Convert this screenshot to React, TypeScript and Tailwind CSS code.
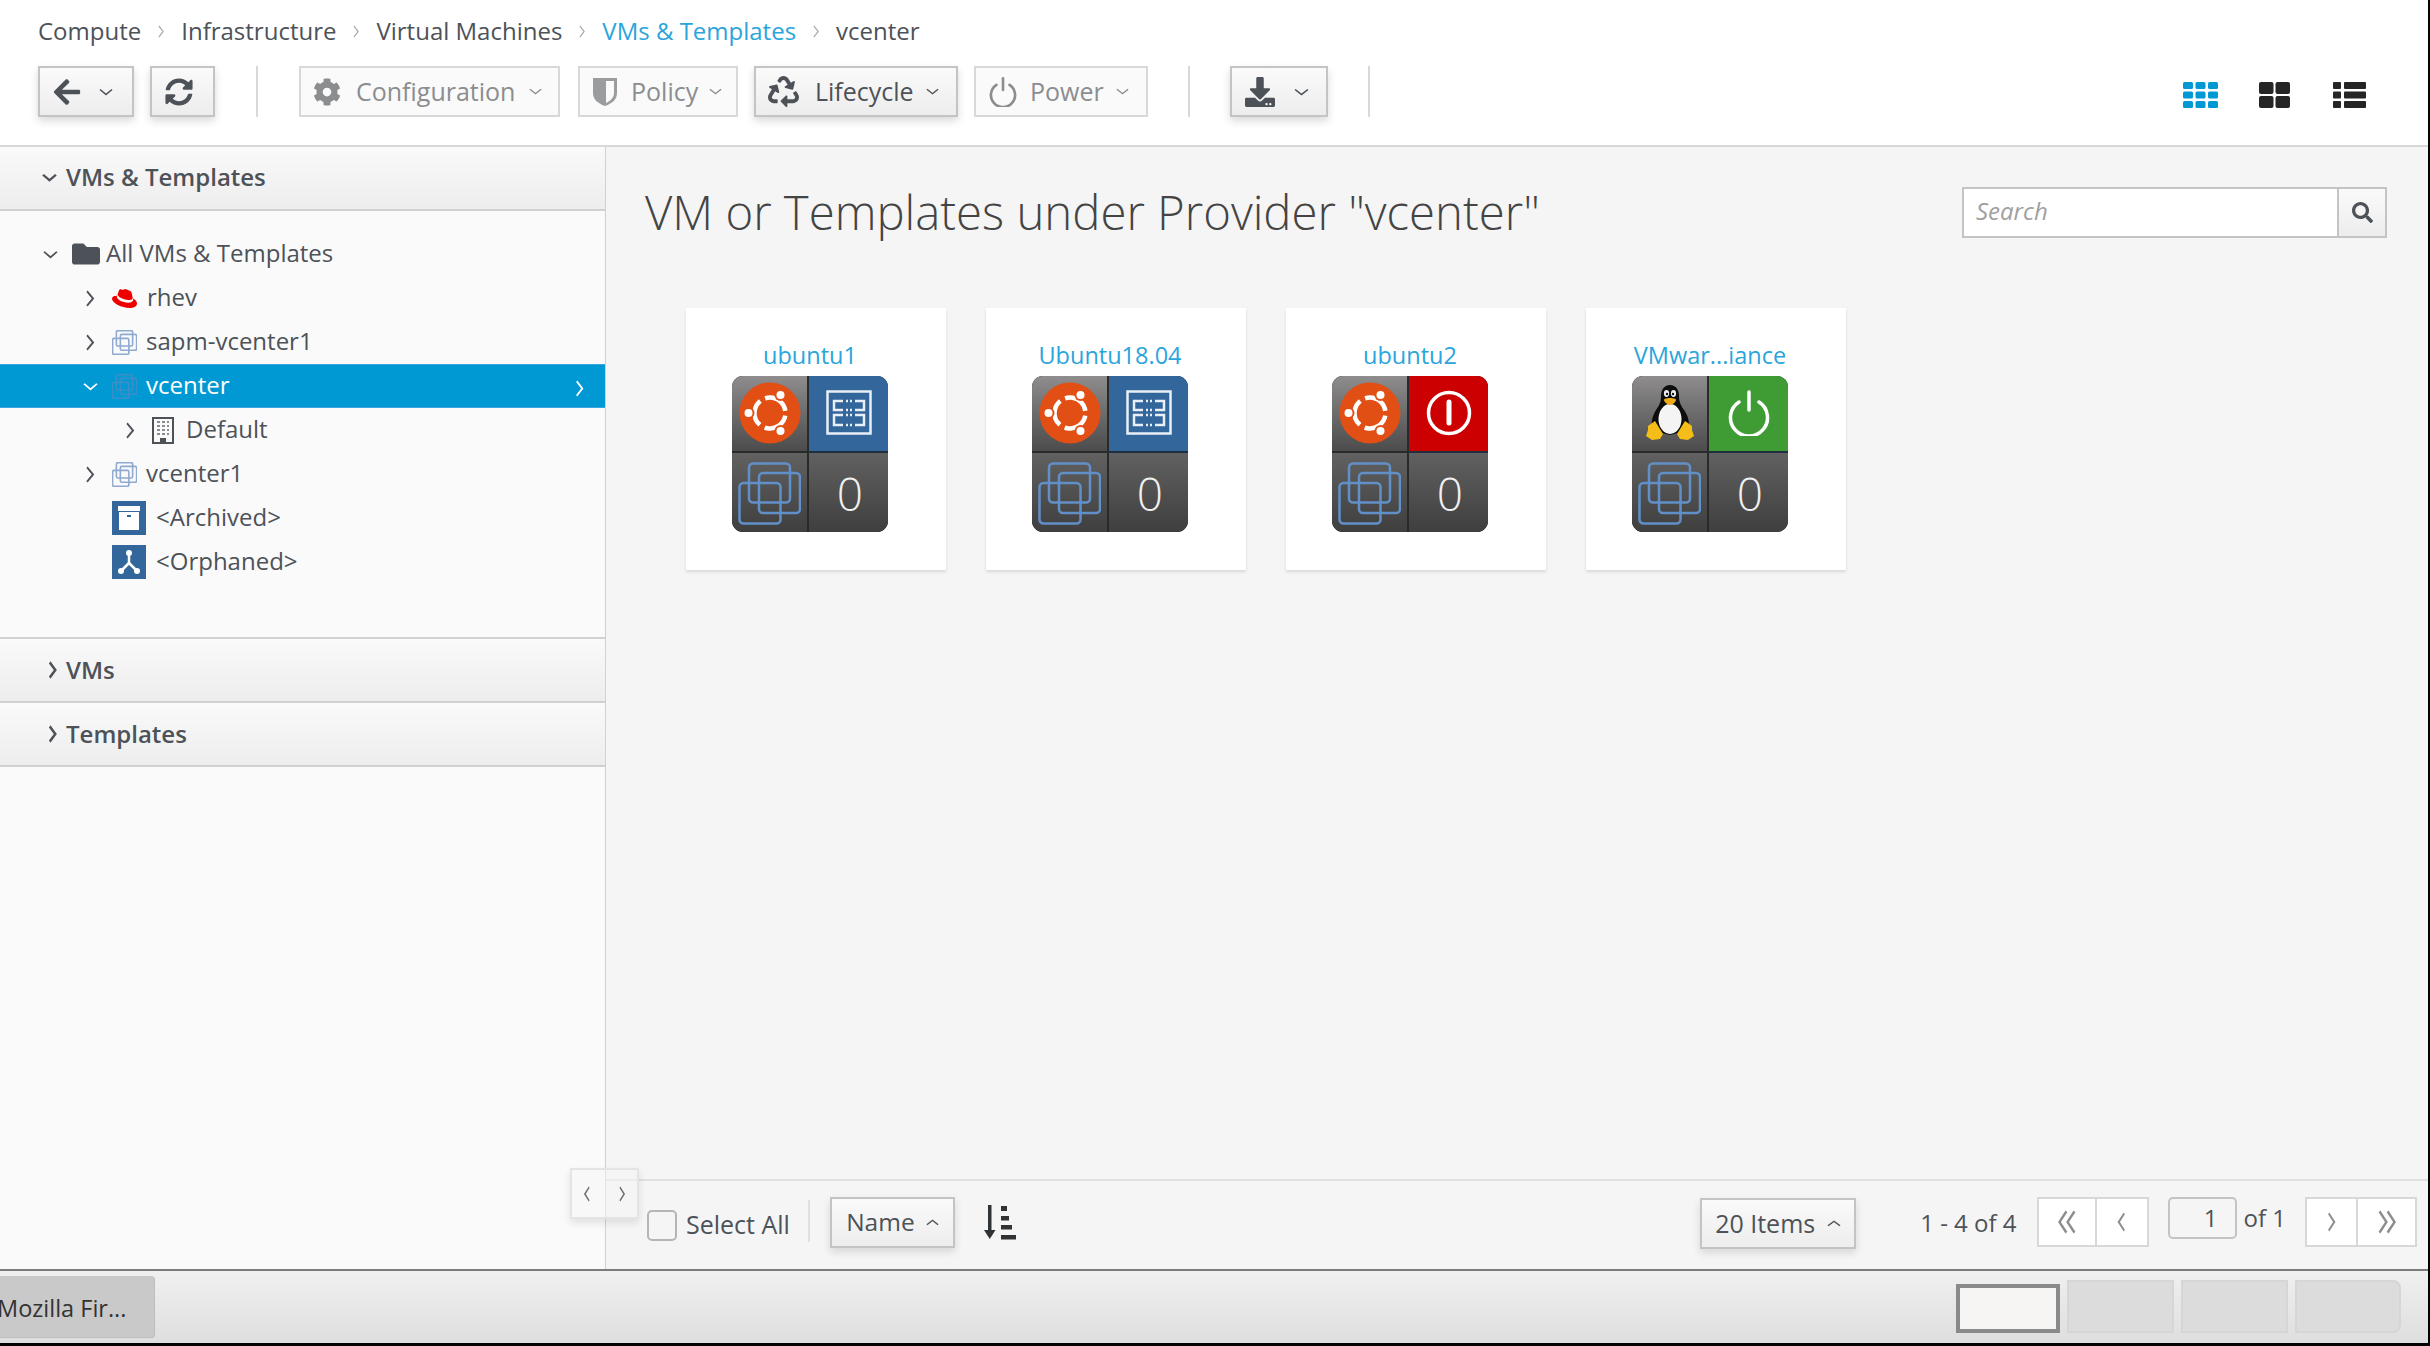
import React from "react";
import { FaArrowLeft, FaSyncAlt, FaCog, FaRecycle, FaDownload, FaSearch, FaFolder, FaRedhat } from "react-icons/fa";

function Chev({ dir, w, h, color = "currentColor", sw = 2, className = "" }: { dir: "up" | "down" | "left" | "right"; w: number; h: number; color?: string; sw?: number; className?: string }) {
  const pts = {
    down: "1,3 7,9 13,3",
    up: "1,9 7,3 13,9",
    right: "4,1 10,7 4,13",
    left: "10,1 4,7 10,13",
  }[dir];
  const vb = dir === "down" || dir === "up" ? "0 0 14 12" : "0 0 14 14";
  return (
    <svg width={w} height={h} viewBox={vb} className={`shrink-0 ${className}`} preserveAspectRatio="none" fill="none" stroke={color} strokeWidth={sw}>
      <polyline points={pts} />
    </svg>
  );
}

function DoubleChev({ dir, color }: { dir: "left" | "right"; color: string }) {
  const pts = dir === "left" ? ["9,1 3,9 9,17", "16,1 10,9 16,17"] : ["3,1 9,9 3,17", "10,1 16,9 10,17"];
  return (
    <svg width="22" height="24" viewBox="0 0 19 18" preserveAspectRatio="none" fill="none" stroke={color} strokeWidth="2">
      <polyline points={pts[0]} />
      <polyline points={pts[1]} />
    </svg>
  );
}

function VmIcon({ size, color, sw = 2 }: { size: number; color: string; sw?: number }) {
  return (
    <svg width={size} height={size} viewBox="0 0 63 63" fill="none" stroke={color} strokeWidth={sw} className="shrink-0">
      <rect x="11" y="1.500" width="41" height="39" rx="4" />
      <rect x="21" y="11" width="41" height="40" rx="4" />
      <rect x="1.500" y="21" width="41" height="40.500" rx="4" />
    </svg>
  );
}

function Ubuntu() {
  return (
    <svg width="62" height="62" viewBox="0 0 62 62" className="shrink-0">
      <circle cx="31" cy="31" r="30.500" fill="#e24f14" />
      <circle cx="31" cy="31" r="15.500" fill="none" stroke="#fff" strokeWidth="4.500" strokeDasharray="27 5.470" transform="rotate(10 31 31)" />
      <circle cx="9.500" cy="31" r="6" fill="#e24f14" />
      <circle cx="9.500" cy="31" r="4" fill="#fff" />
      <circle cx="41.500" cy="13" r="6" fill="#e24f14" />
      <circle cx="41.500" cy="13" r="4" fill="#fff" />
      <circle cx="41.500" cy="49" r="6" fill="#e24f14" />
      <circle cx="41.500" cy="49" r="4" fill="#fff" />
    </svg>
  );
}

function Tux() {
  return (
    <svg width="50" height="57" viewBox="0 0 50 57" className="shrink-0">
      <path d="M25 1c-6 0-9 5-9 11 0 6-1 8-5 14-3 5-5 11-4 16l6 6 12 3 12-3 7-7c0-6-2-11-5-15-4-6-5-9-5-14 0-6-3-11-9-11z" fill="#0d0d0d" />
      <ellipse cx="25" cy="35" rx="11.500" ry="15" fill="#f4f4f4" />
      <ellipse cx="21.500" cy="9.500" rx="2.600" ry="3.400" fill="#eee" />
      <ellipse cx="28.500" cy="9.500" rx="2.600" ry="3.400" fill="#eee" />
      <circle cx="22" cy="10" r="1.200" fill="#111" />
      <circle cx="28" cy="10" r="1.200" fill="#111" />
      <path d="M19 15.500c2-2 10-2 12 0 .8 1-3 5.500-6 5.500s-6.800-4.500-6-5.500z" fill="#eeaa15" />
      <path d="M3 42l7-5 8 13-3 5-8 1-6-4 2-6z" fill="#f5bd17" />
      <path d="M47 42l-7-5-8 13 3 5 8 1 6-4-2-6z" fill="#f5bd17" />
    </svg>
  );
}

function TemplateIcon() {
  return (
    <svg width="46" height="45" viewBox="0 0 46 45" fill="none" stroke="#e9eff6" className="shrink-0">
      <rect x="1.500" y="1.500" width="43" height="42" strokeWidth="2.500" />
      <path d="M17 11H8v9h9M29 11h9v9h-9M17 25H8v10h9M29 25h9v10h-9" strokeWidth="2.500" />
      <path d="M20 11h2M24 11h2M20 20h2M24 20h2M20 25h2M24 25h2M20 35h2M24 35h2" strokeWidth="2.500" />
    </svg>
  );
}

function RedOff() {
  return (
    <svg width="46" height="46" viewBox="0 0 46 46" fill="none" stroke="#fff" className="shrink-0">
      <circle cx="23" cy="23" r="20.500" strokeWidth="3.500" />
      <line x1="23" y1="12" x2="23" y2="33" strokeWidth="5" strokeLinecap="round" />
    </svg>
  );
}

function PowerIcon({ size, color, sw }: { size: number; color: string; sw: number }) {
  return (
    <svg width={size} height={size} viewBox="0 0 42 46" fill="none" stroke={color} strokeWidth={sw} strokeLinecap="round" className="shrink-0">
      <path d="M11 12a18.500 18.500 0 1 0 20 0" />
      <line x1="21" y1="2" x2="21" y2="20" />
    </svg>
  );
}

function ShieldIcon() {
  return (
    <svg width="26" height="30" viewBox="0 0 26 30" className="shrink-0">
      <path d="M1 1h24v15c0 7-6 11-12 13C7 27 1 23 1 16z" fill="#9a9c9e" />
      <path d="M14 4h8v12c0 5-4 8-8 10z" fill="#fafafa" />
    </svg>
  );
}

function Building() {
  return (
    <svg width="22" height="27" viewBox="0 0 22 27" fill="none" className="shrink-0">
      <rect x="1" y="1" width="20" height="25" stroke="#4d5258" strokeWidth="2" />
      <path d="M5 5h3M10 5h3M15 5h2M5 9h3M10 9h3M15 9h2M5 13h3M10 13h3M15 13h2M5 17h3M10 17h3M15 17h2" stroke="#8b8d8f" strokeWidth="2" />
      <rect x="8" y="21" width="6" height="5" fill="#4d5258" />
    </svg>
  );
}

function Archive() {
  return (
    <svg width="34" height="34" viewBox="0 0 34 34" className="shrink-0">
      <rect width="34" height="34" fill="#33669b" />
      <rect x="6" y="5" width="22" height="5" fill="#fff" />
      <rect x="7" y="11" width="20" height="18" fill="#fff" />
      <rect x="15" y="14" width="4" height="2" fill="#33669b" />
    </svg>
  );
}

function Orphan() {
  return (
    <svg width="34" height="34" viewBox="0 0 34 34" className="shrink-0">
      <rect width="34" height="34" fill="#33669b" />
      <g stroke="#fff" strokeWidth="2.500">
        <line x1="17" y1="8" x2="17" y2="19" />
        <line x1="17" y1="18" x2="9" y2="26" />
        <line x1="17" y1="18" x2="25" y2="26" />
      </g>
      <circle cx="17" cy="8" r="3" fill="#fff" />
      <circle cx="9" cy="26" r="3" fill="#fff" />
      <circle cx="25" cy="26" r="3" fill="#fff" />
    </svg>
  );
}

function ViewGrid() {
  const cells: React.ReactNode[] = [];
  for (let r = 0; r < 3; r++) for (let c = 0; c < 3; c++) cells.push(<rect key={`${r}${c}`} x={c * 12.500} y={r * 9.500} width="10" height="7" rx="1.500" fill="#0099d3" />);
  return <svg width="35" height="26" viewBox="0 0 35 26">{cells}</svg>;
}
function ViewMid() {
  return (
    <svg width="31" height="26" viewBox="0 0 31 26" fill="#252525">
      <rect width="14.500" height="12" rx="2" />
      <rect x="16.500" width="14.500" height="12" rx="2" />
      <rect y="14" width="14.500" height="12" rx="2" />
      <rect x="16.500" y="14" width="14.500" height="12" rx="2" />
    </svg>
  );
}
function ViewList() {
  return (
    <svg width="33" height="26" viewBox="0 0 33 26" fill="#252525">
      {[0, 9.500, 19].map((y) => (
        <g key={y}>
          <rect y={y} width="8" height="7" rx="1" />
          <rect x="11" y={y} width="22" height="7" rx="1" />
        </g>
      ))}
    </svg>
  );
}

function SortIcon() {
  return (
    <svg width="32" height="35" viewBox="0 0 32 35" fill="#2f3336">
      <rect x="4" y="0" width="3.500" height="28" />
      <path d="M0 25h11.500l-5.750 9z" />
      <rect x="17" y="1" width="6" height="5" />
      <rect x="17" y="11" width="8" height="4.500" />
      <rect x="17" y="20" width="11" height="4.500" />
      <rect x="17" y="30" width="15" height="4.500" />
    </svg>
  );
}

function Btn({ w, ml, disabled, children }: { w: string; ml: string; disabled?: boolean; children: React.ReactNode }) {
  return (
    <div
      className={`${w} ${ml} h-[51px] flex items-center shrink-0 border-2 text-[25px] ${
        disabled
          ? "border-[#d8d8d8] bg-[#fafafa] text-[#8b8d8f]"
          : "border-[#c4c4c4] bg-gradient-to-b from-[#fafafa] to-[#ededed] text-[#4d5258] shadow-[0_4px_8px_rgba(0,0,0,0.15)]"
      }`}
    >
      {children}
    </div>
  );
}

function Crumb({ children, blue }: { children: React.ReactNode; blue?: boolean }) {
  return <span className={blue ? "text-[#2aa5dc]" : "text-[#4d5258]"}>{children}</span>;
}
function Sep() {
  return <Chev dir="right" w={10} h={13} color="#a8a8a8" sw={1.500} className="mx-[15px]" />;
}
function VDiv({ ml }: { ml: string }) {
  return <div className={`w-[2px] h-[51px] bg-[#d8d8d8] shrink-0 ${ml}`} />;
}

function TreeRow({ pl, chev, icon, gap, selected, children }: { pl: string; chev?: "right" | "down"; icon: React.ReactNode; gap: string; selected?: boolean; children: React.ReactNode }) {
  return (
    <div className={`h-[44px] flex items-center ${pl} ${selected ? "bg-[#0099d3] text-white border-y border-[#39a5dc]" : "text-[#4d5258]"}`}>
      {chev ? (
        <span className="w-[29px] shrink-0 flex">
          <Chev dir={chev} w={chev === "down" ? 15 : 14} h={chev === "down" ? 11 : 17} color={selected ? "#fff" : "#4d5258"} sw={1.800} />
        </span>
      ) : null}
      {icon}
      <span className={`${gap} flex-1 pb-[2px]`}>{children}</span>
      {selected ? <Chev dir="right" w={13} h={17} color="#fff" sw={1.800} className="mr-[19px] mt-[4px]" /> : null}
    </div>
  );
}

function PanelHead({ title, open }: { title: string; open?: boolean }) {
  return (
    <div className={`h-[64px] flex items-center pl-[42px] bg-gradient-to-b from-[#fafafa] to-[#ededed] border-b-2 border-[#d1d1d1] text-[#4d5258] font-semibold ${open ? "pb-[2px]" : ""}`}>
      <span className="w-[24px] shrink-0 flex">
        {open ? <Chev dir="down" w={15} h={11} color="#4d5258" sw={2.200} /> : <Chev dir="right" w={13} h={18} color="#4d5258" sw={2.400} className="ml-[4px]" />}
      </span>
      {title}
    </div>
  );
}

function Card({ title, os, state }: { title: string; os: React.ReactNode; state: React.ReactNode }) {
  return (
    <div className="w-[260px] h-[262px] bg-white shadow-[0_2px_3px_rgba(0,0,0,0.12)] pl-[46px] pt-[31px] shrink-0">
      <div className="w-[156px] h-[37px] flex justify-center whitespace-nowrap text-[#2aa5dc] text-[23.500px] leading-[32px]">{title}</div>
      <div className="w-[156px] h-[156px] rounded-[11px] overflow-hidden grid grid-cols-[77px_79px] grid-rows-[77px_79px] bg-[#111]">
        <div className="bg-gradient-to-b from-[#8f8d8d] to-[#4c4c4c] border-r-2 border-b-2 border-[#2a2a2a] flex items-center justify-center pb-[2px]">{os}</div>
        {state}
        <div className="bg-gradient-to-b from-[#616161] to-[#3f3f3f] border-r-2 border-[#2a2a2a] flex items-center justify-center pt-[2px]">
          <VmIcon size={63} color="#6190c9" sw={2.500} />
        </div>
        <div className="bg-gradient-to-b from-[#616161] to-[#3f3f3f] flex items-center justify-center pl-[3px] text-[#f0f0f0] text-[46px] font-light leading-none">0</div>
      </div>
    </div>
  );
}

function StateCell({ bg, children }: { bg: string; children: React.ReactNode }) {
  return <div className={`${bg} border-b-2 border-[#1f2f40] flex items-center justify-center pb-[2px]`}>{children}</div>;
}

function PagerCell({ w, border, children }: { w: string; border?: boolean; children: React.ReactNode }) {
  return <div className={`${w} h-full flex items-center justify-center ${border ? "border-r-2 border-[#d8d8d8]" : ""}`}>{children}</div>;
}

export default function App() {
  return (
    <div className="w-[2430px] h-[1346px] flex flex-col overflow-hidden bg-white border-r-2 border-black font-['Open_Sans',sans-serif] text-[24px] text-[#4d5258]">
      <header className="h-[147px] shrink-0 border-b-2 border-[#d8d8d8] bg-white pl-[38px] flex flex-col">
        <div className="h-[66px] flex items-center pb-[4px]">
          <Crumb>Compute</Crumb>
          <Sep />
          <Crumb>Infrastructure</Crumb>
          <Sep />
          <Crumb>Virtual Machines</Crumb>
          <Sep />
          <Crumb blue>VMs &amp; Templates</Crumb>
          <Sep />
          <Crumb>vcenter</Crumb>
        </div>
        <div className="flex items-center">
          <Btn w="w-[96px]" ml="ml-0">
            <FaArrowLeft className="ml-[12px] text-[30px]" />
            <Chev dir="down" w={14} h={10} sw={1.500} className="ml-[17px]" />
          </Btn>
          <Btn w="w-[65px]" ml="ml-[16px]">
            <FaSyncAlt className="ml-[13px] text-[28px]" />
          </Btn>
          <VDiv ml="ml-[41px]" />
          <Btn w="w-[261px]" ml="ml-[41px]" disabled>
            <FaCog className="ml-[12px] text-[28px]" />
            <span className="ml-[15px]">Configuration</span>
            <Chev dir="down" w={13} h={9} sw={1.500} className="ml-[14px]" />
          </Btn>
          <Btn w="w-[160px]" ml="ml-[18px]" disabled>
            <span className="ml-[12px] flex"><ShieldIcon /></span>
            <span className="ml-[13px]">Policy</span>
            <Chev dir="down" w={13} h={9} sw={1.500} className="ml-[11px]" />
          </Btn>
          <Btn w="w-[204px]" ml="ml-[16px]">
            <FaRecycle className="ml-[12px] text-[31px]" />
            <span className="ml-[16px] font-medium">Lifecycle</span>
            <Chev dir="down" w={13} h={9} sw={1.500} className="ml-[12px]" />
          </Btn>
          <Btn w="w-[174px]" ml="ml-[16px]" disabled>
            <span className="ml-[12px] flex"><PowerIcon size={30} color="#8b8d8f" sw={4} /></span>
            <span className="ml-[12px]">Power</span>
            <Chev dir="down" w={13} h={9} sw={1.500} className="ml-[12px]" />
          </Btn>
          <VDiv ml="ml-[40px]" />
          <Btn w="w-[98px]" ml="ml-[40px]">
            <FaDownload className="ml-[13px] text-[30px]" />
            <Chev dir="down" w={15} h={10} sw={1.500} className="ml-[19px]" />
          </Btn>
          <VDiv ml="ml-[40px]" />
          <div className="flex-1" />
          <div className="flex items-center mr-[62px] mt-[6px]">
            <ViewGrid />
            <span className="ml-[41px] flex"><ViewMid /></span>
            <span className="ml-[43px] flex"><ViewList /></span>
          </div>
        </div>
      </header>

      <main className="relative flex-1 min-h-0 flex border-b-2 border-[#7c7c7c]">
        <aside className="w-[606px] shrink-0 bg-[#fafafa] border-r border-[#d1d1d1] flex flex-col">
          <PanelHead title="VMs & Templates" open />
          <div className="pt-[21px] pb-[53px] border-b-2 border-[#d1d1d1]">
            <TreeRow pl="pl-[43px]" icon={<FaFolder className="text-[28px] text-[#4d5258] shrink-0" />} chev="down" gap="ml-[6px]">All VMs &amp; Templates</TreeRow>
            <TreeRow pl="pl-[83px]" chev="right" icon={<FaRedhat className="text-[25px] text-[#e00] shrink-0" />} gap="ml-[10px]">rhev</TreeRow>
            <TreeRow pl="pl-[83px]" chev="right" icon={<VmIcon size={25} color="#8fa9cf" sw={4} />} gap="ml-[9px]">sapm-vcenter1</TreeRow>
            <TreeRow pl="pl-[83px]" chev="down" selected icon={<VmIcon size={25} color="#3a8fc9" sw={4} />} gap="ml-[9px]">vcenter</TreeRow>
            <TreeRow pl="pl-[123px]" chev="right" icon={<Building />} gap="ml-[12px]">Default</TreeRow>
            <TreeRow pl="pl-[83px]" chev="right" icon={<VmIcon size={25} color="#8fa9cf" sw={4} />} gap="ml-[9px]">vcenter1</TreeRow>
            <TreeRow pl="pl-[112px]" icon={<Archive />} gap="ml-[10px]">&lt;Archived&gt;</TreeRow>
            <TreeRow pl="pl-[112px]" icon={<Orphan />} gap="ml-[10px]">&lt;Orphaned&gt;</TreeRow>
          </div>
          <PanelHead title="VMs" />
          <PanelHead title="Templates" />
        </aside>

        <section className="flex-1 min-w-0 bg-[#f5f5f5] flex flex-col">
          <div className="flex-1 min-h-0 pl-[39px] pr-[41px] pt-[36px]">
            <div className="flex items-center justify-between h-[58px]">
              <h1 className="text-[47.300px] font-light text-[#444] leading-none whitespace-nowrap">VM or Templates under Provider "vcenter"</h1>
              <div className="w-[425px] h-[51px] flex border-2 border-[#c4c4c4] bg-white">
                <input readOnly placeholder="Search" className="flex-1 min-w-0 pl-[12px] pb-[2px] bg-white outline-none text-[24px] placeholder:italic placeholder:text-[#a0a0a0]" />
                <div className="w-[48px] shrink-0 border-l-2 border-[#c4c4c4] bg-gradient-to-b from-[#fafafa] to-[#ededed] flex items-center justify-center">
                  <FaSearch className="text-[21px] text-[#4d5258]" />
                </div>
              </div>
            </div>
            <div className="flex gap-[40px] ml-[41px] mt-[67px]">
              <Card title="ubuntu1" os={<Ubuntu />} state={<StateCell bg="bg-[#33669b]"><TemplateIcon /></StateCell>} />
              <Card title="Ubuntu18.04" os={<Ubuntu />} state={<StateCell bg="bg-[#33669b]"><TemplateIcon /></StateCell>} />
              <Card title="ubuntu2" os={<Ubuntu />} state={<StateCell bg="bg-[#cc0000]"><RedOff /></StateCell>} />
              <Card title="VMwar...iance" os={<Tux />} state={<StateCell bg="bg-[#3f9c35]"><PowerIcon size={46} color="#fff" sw={3.500} /></StateCell>} />
            </div>
          </div>
          <div className="h-[90px] shrink-0 border-t-2 border-[#e0e0e0] flex items-start pl-[41px] pr-[11px] pt-[16px]">
            <div className="w-[30px] h-[31px] mt-[13px] rounded-[5px] border-2 border-[#b5b5b5] bg-[#f5f5f5] shrink-0" />
            <span className="ml-[9px] mt-[9px] text-[25px] text-[#4d5258] whitespace-nowrap">Select All</span>
            <div className="w-[2px] h-[42px] ml-[18px] mt-[3px] bg-[#e0e0e0] shrink-0" />
            <div className="ml-[20px] w-[125px] h-[51px] flex items-center justify-center border-2 border-[#c4c4c4] bg-gradient-to-b from-[#fafafa] to-[#ededed] shadow-[0_4px_8px_rgba(0,0,0,0.12)] shrink-0">
              <span className="font-medium text-[24.500px]">Name</span>
              <Chev dir="up" w={13} h={9} sw={1.500} className="ml-[11px]" />
            </div>
            <span className="ml-[29px] mt-[8px] flex"><SortIcon /></span>
            <div className="flex-1" />
            <div className="w-[156px] h-[51px] mt-[1px] flex items-center justify-center border-2 border-[#c4c4c4] bg-gradient-to-b from-[#fafafa] to-[#ededed] shadow-[0_4px_8px_rgba(0,0,0,0.12)] shrink-0">
              <span className="font-medium text-[25px]">20 Items</span>
              <Chev dir="up" w={14} h={9} sw={1.500} className="ml-[12px]" />
            </div>
            <span className="ml-[64px] mt-[8px] whitespace-nowrap">1 - 4 of 4</span>
            <div className="ml-[20px] w-[112px] h-[50px] flex border-2 border-[#d8d8d8] bg-white shrink-0">
              <PagerCell w="w-[60px]" border><DoubleChev dir="left" color="#8b8d8f" /></PagerCell>
              <PagerCell w="w-[50px]"><Chev dir="left" w={13} h={20} color="#8b8d8f" sw={1.800} /></PagerCell>
            </div>
            <div className="ml-[19px] w-[69px] h-[42px] rounded-[5px] border-2 border-[#c4c4c4] bg-[#f5f5f5] flex items-center justify-end pr-[17px] shrink-0">1</div>
            <span className="ml-[7px] mt-[3px] whitespace-nowrap">of 1</span>
            <div className="ml-[19px] w-[112px] h-[50px] flex border-2 border-[#d8d8d8] bg-white shrink-0">
              <PagerCell w="w-[52px]" border><Chev dir="right" w={13} h={20} color="#8b8d8f" sw={1.800} /></PagerCell>
              <PagerCell w="w-[58px]"><DoubleChev dir="right" color="#8b8d8f" /></PagerCell>
            </div>
          </div>
        </section>

        <div className="absolute left-[570px] top-[1021px] w-[69px] h-[51px] border-2 border-[#e4e4e4] bg-[#f5f5f5]/50 shadow-[0_4px_8px_rgba(0,0,0,0.1)] flex items-center justify-between px-[10px]">
          <Chev dir="left" w={10} h={16} color="#6a6e73" sw={1.800} />
          <Chev dir="right" w={10} h={16} color="#6a6e73" sw={1.800} />
        </div>
      </main>

      <footer className="h-[72px] shrink-0 bg-gradient-to-b from-[#f0f0f0] to-[#dedede] flex items-start relative">
        <div className="w-[155px] h-[62px] mt-[5px] rounded-r-[4px] bg-[#c9c9c9] border-r border-b border-[#bdbdbd] overflow-hidden flex items-center whitespace-nowrap text-[23.500px] text-[#333] shrink-0">
          <span className="-ml-[3px] mt-[5px]">Mozilla Fir...</span>
        </div>
        <div className="flex-1" />
        <div className="flex gap-[7px] mr-[27px] mt-[9px] h-[53px]">
          <div className="w-[104px] h-[49px] self-end border-[4px] border-[#8a8a8a] bg-[#f6f5f3]" />
          <div className="w-[107px] border-2 border-[#d6d6d6] bg-[#dcdcdc]" />
          <div className="w-[107px] border-2 border-[#d6d6d6] bg-[#dcdcdc]" />
          <div className="w-[106px] border-2 border-[#d6d6d6] bg-[#dcdcdc] rounded-tr-[8px] rounded-br-[8px]" />
        </div>
      </footer>
      <div className="h-[3px] shrink-0 bg-black" />
    </div>
  );
}
